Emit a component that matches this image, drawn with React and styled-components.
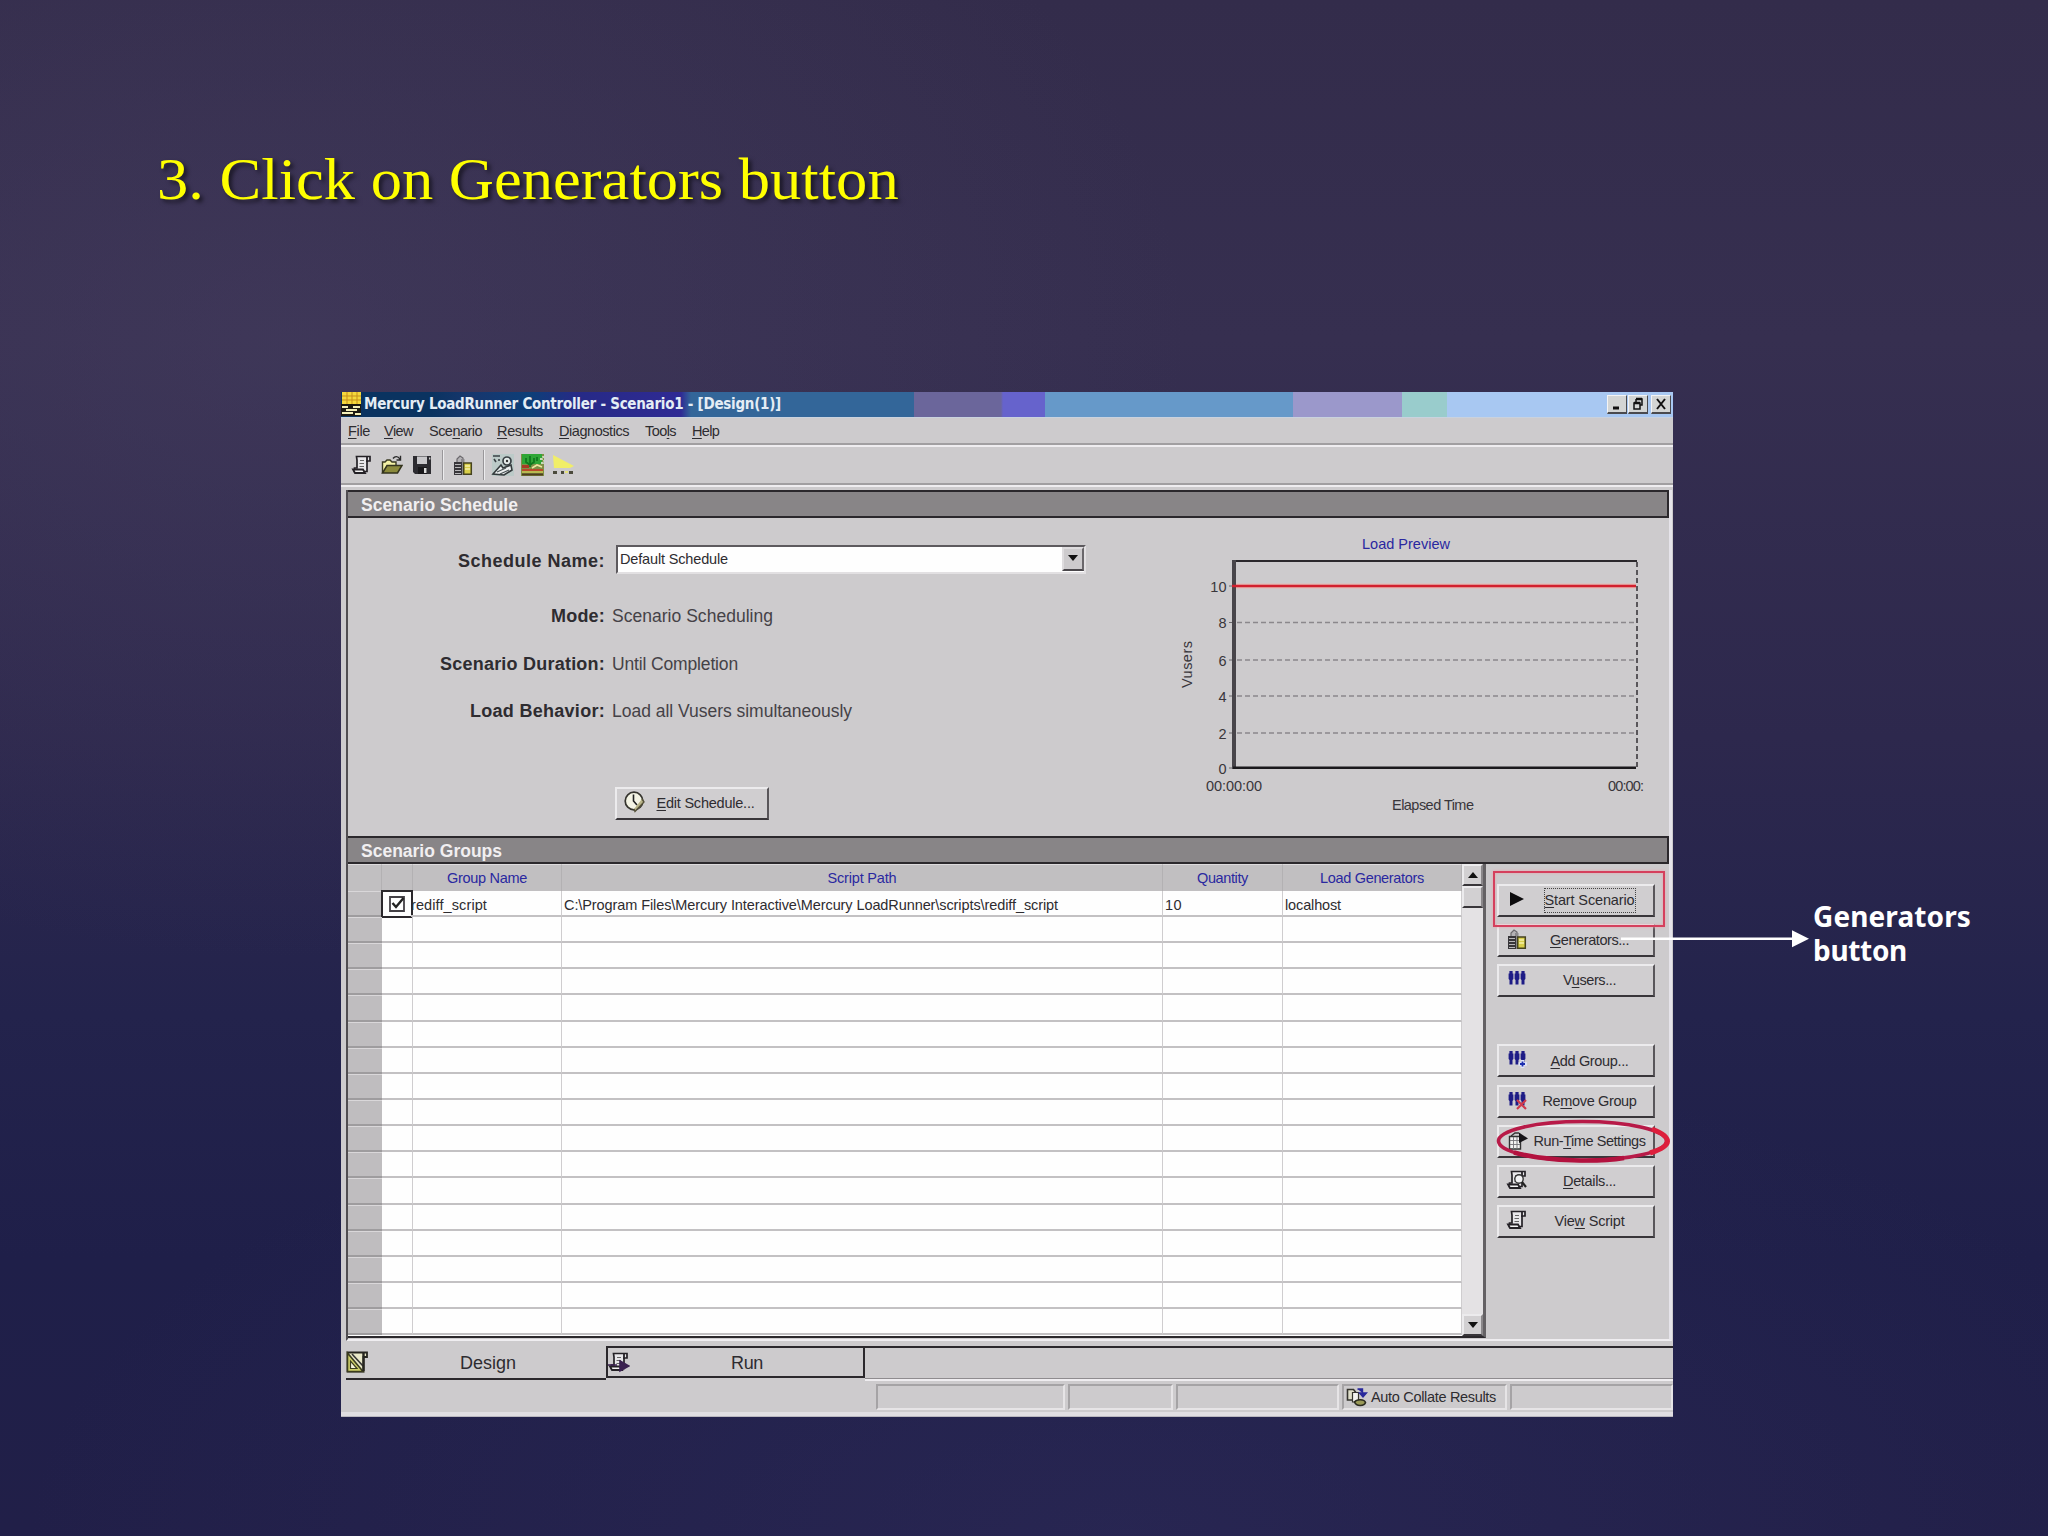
import React from "react";
import styled, { createGlobalStyle } from "styled-components";

const SANS = '"Liberation Sans", Arial, sans-serif';
const TAHOMA = '"DejaVu Sans Condensed", "DejaVu Sans", Tahoma, sans-serif';
const NOTO = '"Noto Sans", Tahoma, sans-serif';
const SERIF = '"Liberation Serif", "Times New Roman", serif';

const C = {
  face: "#cdcbcd",
  head: "#888587",
  dark: "#2b282c",
  gray: "#8f8c8f",
  light: "#efedf0",
  grid: "#c3c1c3",
  blue: "#2a28a0",
  ink: "#2e2c30",
};

const Global = createGlobalStyle`
  body { margin: 0; background: #25244b; }
  * { box-sizing: border-box; }
`;

/* ---------- fitted text ---------- */

const ruler = document.createElement("canvas").getContext("2d");

function spacingFor(text, width, size, weight, family) {
  ruler.font = `${weight} ${size}px ${family}`;
  return (width - ruler.measureText(text).width) / text.length;
}

const Run = styled.span`
  display: inline-block;
  width: ${(p) => p.$w}px;
  flex: none;
  white-space: pre;
  font: ${(p) => p.$weight} ${(p) => p.$size}px/1.15 ${(p) => p.$family};
  letter-spacing: ${(p) => p.$ls}px;
  color: ${(p) => p.$color};
`;

const Key = styled.span`
  text-decoration: underline;
  text-underline-offset: 2px;
  text-decoration-thickness: 1px;
`;

/* An ampersand marks the mnemonic letter, as in a resource file. */
function Text({ children, w, size = 14.5, bold, family = SANS, color = C.ink }) {
  const plain = children.replace("&", "");
  const weight = bold ? 700 : 400;
  const at = children.indexOf("&");
  return (
    <Run
      $w={w}
      $size={size}
      $weight={weight}
      $family={family}
      $color={color}
      $ls={spacingFor(plain, w, size, weight, family)}
    >
      {at < 0 ? plain : (
        <>
          {plain.slice(0, at)}
          <Key>{plain[at]}</Key>
          {plain.slice(at + 1)}
        </>
      )}
    </Run>
  );
}

/* ---------- slide ---------- */

const Slide = styled.main`
  position: relative;
  width: 2048px;
  height: 1536px;
  overflow: hidden;
  padding: 146px 0 0 157px;
  background:
    radial-gradient(ellipse 900px 620px at 14% 22%, rgba(74, 66, 100, 0.42), rgba(74, 66, 100, 0) 100%),
    radial-gradient(ellipse 1100px 500px at 55% 100%, rgba(52, 50, 100, 0.35), rgba(52, 50, 100, 0) 100%),
    linear-gradient(180deg, #332c4b 0%, #362f50 22%, #2d284d 48%, #23234c 66%, #1f1f49 82%, #211f48 100%);
`;

const Heading = styled.h1`
  margin: 0;
  height: 246px;
  font: 400 59px/66px ${SERIF};
  white-space: nowrap;
  color: #ffff00;
  text-shadow: 3px 3px 4px rgba(0, 0, 0, 0.55);
  transform: scaleX(1.06);
  transform-origin: 0 0;
`;

const Callout = styled.div`
  position: absolute;
  left: 1813px;
  top: 900px;
  display: flex;
  flex-direction: column;
  gap: 2px;
`;

const Pointer = styled.svg`
  position: absolute;
  left: 1620px;
  top: 928px;
`;

/* ---------- window ---------- */

const Window = styled.section`
  display: flex;
  flex-direction: column;
  width: 1332px;
  height: 1025px;
  margin-left: 184px;
  background: ${C.face};
`;

const TitleBar = styled.header`
  display: flex;
  align-items: center;
  height: 26px;
  padding: 0 2px 1px 0;
  border-bottom: 1px solid #c9d2de;
  background: linear-gradient(
    90deg,
    #0a3360 0 90px, #17366d 130px, #0d3f78 190px, #262a86 235px, #2f2a94 340px,
    #336699 350px 573px,
    #6b669b 573px 660px,
    #6663cc 662px 704px,
    #6699c9 704px 952px,
    #9b98cb 952px 1061px,
    #99cccc 1061px 1106px,
    #a8c8f2 1106px
  );
`;

const TitleText = styled.div`
  flex: 1;
  padding: 1px 0 0 3px;
`;

const Caption = styled.span`
  display: grid;
  place-items: center;
  width: 20px;
  height: 19px;
  margin-left: ${(p) => p.$gap || 1}px;
  background: #d3d5d4;
  border: 1px solid;
  border-color: #f4f4f4 #4a4a4e #4a4a4e #f4f4f4;
  border-bottom-width: 2px;
`;

const MenuBar = styled.nav`
  display: flex;
  align-items: center;
  height: 29px;
  padding: 0 0 1px 7px;
  border-bottom: 2px solid ${C.light};
  box-shadow: inset 0 -2px 0 #a19fa1;
`;

const MenuItem = styled.span`
  width: ${(p) => p.$slot}px;
`;

const ToolBar = styled.div`
  display: flex;
  align-items: center;
  height: 40px;
  padding: 0 0 2px 10px;
  border-bottom: 2px solid ${C.light};
  box-shadow: inset 0 -2px 0 #a19fa1;
`;

const Tool = styled.span`
  display: grid;
  place-items: center;
  width: ${(p) => p.$slot || 30}px;
`;

const Separator = styled.i`
  width: 2px;
  height: 30px;
  margin: 0 ${(p) => p.$after || 9}px 0 ${(p) => p.$before || 7}px;
  background: linear-gradient(90deg, #99979a 50%, #ececee 50%);
`;

const Body = styled.div`
  display: flex;
  flex-direction: column;
  height: 853px;
  margin: 3px 1px 0 5px;
  border-left: 2px solid #504d51;
  border-right: 3px solid #e6e4ea;
  border-bottom: 2px solid ${C.light};
`;

const SectionBar = styled.h2`
  display: flex;
  align-items: center;
  height: 28px;
  margin: 0;
  padding: 3px 0 0 13px;
  background: ${C.head};
  border: 2px solid ${C.dark};
  border-width: 2px 2px 2px 0;
`;

const Schedule = styled.div`
  display: flex;
  height: 318px;
`;

const Form = styled.div`
  display: flex;
  flex-direction: column;
  width: 802px;
  padding-top: 27px;
`;

const Field = styled.div`
  display: grid;
  grid-template-columns: 257px 1fr;
  column-gap: 7px;
  align-items: center;
  justify-items: start;
  height: ${(p) => p.$h}px;
  margin-bottom: ${(p) => p.$after || 0}px;
`;

const Name = styled.div`
  display: flex;
  justify-self: end;
  padding-top: ${(p) => p.$drop || 0}px;
`;

const Combo = styled.div`
  display: flex;
  align-items: center;
  width: 470px;
  height: 29px;
  margin-left: 4px;
  padding-left: 2px;
  background: #fefefe;
  border: 2px solid;
  border-color: #5d5a5e #e2e0e2 #e2e0e2 #5d5a5e;
`;

const Drop = styled.span`
  display: grid;
  place-items: center;
  width: 22px;
  height: 24px;
  margin-left: auto;
  padding-bottom: 3px;
  background: ${C.face};
  border: 2px solid;
  border-color: #dedcde #6a676b #4a474b #dedcde;
`;

const Push = styled.button`
  display: flex;
  align-items: center;
  width: ${(p) => p.$w || 158}px;
  height: 33px;
  margin: ${(p) => p.$m || "0"};
  padding: 0 9px 0 0;
  background: #d0ced0;
  border: 2px solid;
  border-color: #ecebed #59565a #39363a #ecebed;
  font: inherit;
`;

const Glyph = styled.span`
  display: grid;
  place-items: center;
  flex: none;
  width: 36px;
  height: 28px;
  padding-bottom: 3px;
`;

const Caps = styled.span`
  display: flex;
  flex: 1;
  justify-content: center;
  min-width: 0;
`;

const Focus = styled.span`
  display: flex;
  height: 23px;
  align-items: center;
  outline: 1px dotted #444;
  outline-offset: 0;
`;

/* ---------- groups ---------- */

const Groups = styled.div`
  display: flex;
  flex: 1;
  min-height: 0;
`;

const Table = styled.div`
  width: 1114px;
  height: 474px;
  background: #fefefe;
  border-bottom: 2px solid ${C.dark};
  overflow: hidden;
`;

const Row = styled.div`
  display: grid;
  grid-template-columns: 34px 31px 149px 601px 120px 179px;
  height: ${(p) => (p.$head ? 27 : 26.15)}px;
`;

const HeadCell = styled.div`
  display: flex;
  justify-content: center;
  align-items: center;
  background: #c1bfc1;
  border-right: 1px solid #b3b1b3;
  border-top: 1px solid #dddbdd;
`;

const Cell = styled.div`
  display: flex;
  align-items: center;
  min-width: 0;
  padding: 4px 0 0 2px;
  border-right: 1px solid #cfcdcf;
  border-bottom: 2px solid ${C.grid};
`;

const NameCell = styled(Cell)`
  padding-left: 0;
  margin-left: -2px;
`;

const Stub = styled.div`
  background: #bfbdbf;
  border-bottom: 2px solid #9e9c9e;
  border-top: 1px solid #d9d7d9;
`;

const CheckCell = styled.div`
  display: grid;
  place-items: center;
  margin: -1px 0 -1px -1px;
  border: 2px solid ${C.dark};
`;

const Scroll = styled.div`
  display: flex;
  flex-direction: column;
  width: 24px;
  height: 474px;
  background: #e4e2e4;
  border-right: 3px solid #646164;
  border-bottom: 2px solid ${C.dark};
`;

const ScrollPart = styled.div`
  display: grid;
  place-items: center;
  height: 22px;
  margin-top: ${(p) => (p.$end ? "auto" : 0)};
  background: #d2d0d2;
  border: 2px solid;
  border-color: #ecebed #8a878a #39363a #ecebed;
`;

const Actions = styled.aside`
  position: relative;
  display: flex;
  flex-direction: column;
  gap: 7.15px;
  flex: 1;
  padding: 20px 0 0 11px;
`;

const Highlight = styled.i`
  position: absolute;
  left: 7px;
  top: 7px;
  width: 172px;
  height: 56px;
  border: 2px solid #d5405d;
  box-shadow: 0 0 3px #e9a5ae, inset 0 0 3px #e9a5ae;
`;

const Ring = styled.svg`
  position: absolute;
  left: 8px;
  top: 252px;
`;

const GapRow = styled.i`
  height: 33px;
`;

/* ---------- bottom ---------- */

const TabStrip = styled.div`
  display: flex;
  align-items: flex-start;
  height: 40px;
  padding-top: 5px;
`;

const Tab = styled.div`
  display: flex;
  align-items: center;
  width: ${(p) => (p.$active ? 260 : 259)}px;
  height: ${(p) => (p.$active ? 34 : 32)}px;
  margin-left: ${(p) => (p.$active ? 5 : 0)}px;
  border: 2px solid ${C.dark};
  border-width: ${(p) => (p.$active ? "0 0 2px" : "2px")};
`;

const TabName = styled.span`
  display: flex;
  margin-left: ${(p) => p.$x}px;
  padding-top: 2px;
`;

const TabRest = styled.div`
  flex: 1;
  height: 35px;
  border-top: 2px solid ${C.dark};
  border-bottom: 2px solid ${C.light};
  box-shadow: inset 0 -1px 0 ${C.gray};
`;

const StatusBar = styled.footer`
  display: flex;
  gap: 3px;
  height: 36px;
  padding: 3px 0 0 535px;
  border-bottom: 1px solid #b9b7bf;
  box-shadow: inset 0 -4px 0 #e0dee2;
`;

const StatusCell = styled.div`
  display: flex;
  align-items: center;
  gap: 3px;
  width: ${(p) => p.$w}px;
  height: 26px;
  padding-left: 1px;
  border: 2px solid;
  border-color: #a5a3a5 #e6e4e6 #e6e4e6 #a5a3a5;
`;

/* ---------- icons ---------- */

const Svg = ({ w = 22, h = 22, children, box }) => (
  <svg width={w} height={h} viewBox={box || "0 0 22 22"} fill="none">{children}</svg>
);

const Triangle = ({ up }) => (
  <Svg w={10} h={6} box="0 0 10 6"><path d={up ? "M0 6L5 0L10 6Z" : "M0 0H10L5 6Z"} fill="#111" /></Svg>
);

const AppIcon = () => (
  <Svg w={20} h={24} box="0 0 20 24">
    <path d="M1 0H20V12H1Z" fill="#f4d83c" />
    <path d="M1 4H20M1 8H20M6 0V12M11 0V12M16 0V12" stroke="#c58f1c" />
    <path d="M0 12H20V24H0Z" fill="#1c1a12" />
    <path d="M1 14H7V16H1ZM12 14H19V16H12ZM5 17H16V19H5ZM1 20H12V22H1ZM14 21H20V23H14Z" fill="#f3efb8" />
  </Svg>
);

const ScrollIcon = ({ mark }) => (
  <Svg>
    <path d="M5.5 2.5H19V7H16V17.5H3.5V14H6V6Z" fill="#e8e7ea" stroke="#242126" strokeWidth="1.7" />
    <path d="M16 3V8M2 15.5H12L14 19H4Z" stroke="#242126" strokeWidth="1.8" fill="#f4f4f4" />
    <path d="M9 6.5H13M8.5 9.5H13M8.5 12.5H13" stroke="#666" strokeWidth="1.2" />
    {mark === "lens" && <><circle cx="13" cy="10" r="4.2" fill="#f1f1f3" stroke="#333" strokeWidth="1.4" /><path d="M16 13L20 18" stroke="#222" strokeWidth="2.2" /></>}
    {mark === "run" && <path d="M0 14H9M12 10L21 15L12 20Z" fill="#3b2150" stroke="#3b2150" strokeWidth="1.6" />}
  </Svg>
);

const OpenIcon = () => (
  <Svg>
    <path d="M1.5 19V8H4L6 6H9L11 8H15V11" fill="#f3f1a6" stroke="#3a3a22" strokeWidth="1.4" />
    <path d="M1.5 19L6 11.5H21L16.5 19Z" fill="#8b8a3c" stroke="#33331d" strokeWidth="1.5" />
    <path d="M12 4.5C14 1.8 17 2 18.8 5M19.5 1.8V6H15.5" stroke="#2b2b2b" strokeWidth="1.4" />
  </Svg>
);

const SaveIcon = () => (
  <Svg>
    <path d="M2 2H20V20H4L2 18Z" fill="#2d2c31" />
    <path d="M6 2.5H16V10H6Z" fill="#c9c8cb" />
    <path d="M7 13H16V20H7Z" fill="#19181b" />
    <path d="M13 14H15.5V19H13Z" fill="#dcdcdc" />
    <path d="M18 3.5H19.4V5.5H18Z" fill="#ccc" />
  </Svg>
);

const ServerIcon = () => (
  <Svg>
    <path d="M5 8V5L8 2L11 4V8" fill="#b4b2b5" stroke="#6b696d" strokeWidth="1.2" />
    <path d="M9 5H12.5V21H9Z" fill="#8a888c" />
    <path d="M2 8H10V21H2Z" fill="#38363a" />
    <path d="M3 10.5H9M3 13.5H9M3 16.5H9M3 19.5H9" stroke="#b9b8ba" strokeWidth="1" />
    <path d="M11.7 9H19.3V20.3H11.7Z" fill="#d9cf49" stroke="#45431f" strokeWidth="1.5" />
    <path d="M13 12H18M13 15H18" stroke="#f5f1a8" strokeWidth="1.4" />
  </Svg>
);

const GearsIcon = () => (
  <Svg w={24} h={24} box="0 0 24 24">
    <path d="M1 1H23V23H1Z" fill="#bccac8" />
    <circle cx="16" cy="8" r="4" stroke="#3a4145" strokeWidth="1.7" fill="#e6eceb" />
    <circle cx="16" cy="8" r="1.2" fill="#333" />
    <path d="M2 3H9M3 6L5 9M8 6V8" stroke="#3a4145" strokeWidth="1.6" />
    <path d="M2 21L10 12L12 15L20 12L21 17L13 22Z" fill="#eceff0" stroke="#343a3c" strokeWidth="1.6" />
    <path d="M6 19L15 15M9 21L18 17" stroke="#4c5456" strokeWidth="1.3" />
  </Svg>
);

const ResultsIcon = () => (
  <Svg w={25} h={24} box="0 0 25 24">
    <path d="M1 1H24V23H1Z" fill="#7f8f45" />
    <path d="M2 1H22V11H2Z" fill="#2fa636" />
    <path d="M22 3H24V5H20V7H24V9H21V11H24" fill="#c9d9b8" />
    <path d="M6 5V9L10 12L14 9V5M10 3V14M17 4V8" stroke="#12791f" strokeWidth="1.8" />
    <path d="M2 12H9V15H2Z" fill="#a83a24" />
    <path d="M12 15L17 12L22 14" stroke="#efe7a0" strokeWidth="1.6" />
    <path d="M2 17H23" stroke="#b94a2c" strokeWidth="2" />
    <path d="M2 19H23" stroke="#c9c354" strokeWidth="1.6" />
    <path d="M2 21.5H23" stroke="#513c20" strokeWidth="2" />
  </Svg>
);

const LaunchIcon = () => (
  <Svg w={24} h={24} box="0 0 24 24">
    <path d="M2 2L23 13L19 15H3Z" fill="#f1ee68" />
    <path d="M2 18H6V21H2ZM10 18H13V21H10ZM18 18H22V21H18Z" fill="#4b4a3c" />
    <path d="M14 19H17" stroke="#e6e27a" strokeWidth="2" />
  </Svg>
);

const ClockIcon = () => (
  <Svg w={24} h={24} box="0 0 24 24">
    <circle cx="11" cy="11" r="8.8" fill="#f4f4e4" stroke="#35342e" strokeWidth="1.7" />
    <path d="M10.5 4.5V11L14 15" stroke="#222" strokeWidth="1.6" />
    <path d="M19 9L21 12L12 21.5L11 19" stroke="#55513a" strokeWidth="1.4" fill="#b9b58a" />
  </Svg>
);

const UsersIcon = ({ mark }) => (
  <Svg>
    {[5, 11, 17].map((x) => (
      <g key={x} fill="#1e1c86">
        <path d={`M${x - 1.6} 3H${x + 1.6}V6H${x - 1.6}Z`} />
        <path d={`M${x - 2.4} 5.4H${x + 2.4}V11L${x + 1.5} 12V16.5H${x - 1.5}V12L${x - 2.4} 11Z`} />
      </g>
    ))}
    {mark === "remove" && <path d="M11 11L20 20M20 11L11 20" stroke="#cf3a4c" strokeWidth="2.2" />}
    {mark === "add" && <path d="M12.5 16H21M16.5 12V20" stroke="#dfe3f8" strokeWidth="3.6" />}
    {mark === "add" && <path d="M14 16H19M16.5 13.5V18.5" stroke="#1c2fae" strokeWidth="1.8" />}
  </Svg>
);

const PlayIcon = () => (
  <Svg w={16} h={16} box="0 0 16 16"><path d="M1 1L15 8L1 15Z" fill="#0c0b0d" /></Svg>
);

const RunTimeIcon = () => (
  <Svg>
    <path d="M3.5 7.5H14.5V20H3.5Z" fill="#f3f2f3" stroke="#333" strokeWidth="1.4" />
    <path d="M4 11.5H14M4 15.5H14M7.5 8V20M11 8V20" stroke="#77757a" strokeWidth="0.9" />
    <path d="M5 7L9 4H13" stroke="#333" strokeWidth="1.4" />
    <path d="M13 3.5L22 9.5L13 14Z" fill="#161418" />
  </Svg>
);

const DesignIcon = () => (
  <Svg>
    <path d="M1.5 1.5H21V6H17.5V20.5H1.5Z" fill="#e9e8c8" stroke="#26251f" strokeWidth="1.8" />
    <path d="M1.5 2V20.5H17Z" fill="#cfd06a" stroke="#3c3d1f" strokeWidth="1.6" />
    <path d="M4.5 10V17.5H11Z" fill="#f4f3da" stroke="#3c3d1f" strokeWidth="1.2" />
    <path d="M6 3L17 15" stroke="#333" strokeWidth="1.6" />
    <path d="M17.5 2V20" stroke="#26251f" strokeWidth="2.4" />
  </Svg>
);

const CollateIcon = () => (
  <Svg w={23}>
    <path d="M2 3.5H8L10 6V14H2Z" fill="#dfdec9" stroke="#35342e" strokeWidth="1.6" />
    <path d="M7 6.5H13V16H7Z" fill="#f3f3f0" stroke="#35342e" strokeWidth="1.2" />
    <path d="M12 3H17V7M14 7H21L17.5 11Z" fill="#29299c" stroke="#29299c" strokeWidth="1.4" />
    <path d="M9 16C11 13 19 13 20 16.5C19 20 11 21 9 16Z" fill="#9a9a58" stroke="#2b2b20" strokeWidth="1.6" />
  </Svg>
);

/* ---------- chart ---------- */

const LEVELS = [[10, 586], [8, 622.5], [6, 660], [4, 696], [2, 733], [0, 768]];

function LoadPreview() {
  const t = { fontFamily: SANS, fontSize: 14.5, fill: "#39363b", lengthAdjust: "spacing" };
  return (
    <svg width="519" height="318" viewBox="1151 518 519 318">
      <text {...t} x="1363" y="549" textLength="88" fill={C.blue}>Load Preview</text>
      <path d="M1236 561H1638" stroke="#2b282c" strokeWidth="2" />
      {LEVELS.slice(1, 5).map(([v, y]) => (
        <path key={v} d={`M1238 ${y}H1637`} stroke="#8b888c" strokeWidth="1.6" strokeDasharray="5 3" />
      ))}
      {LEVELS.map(([v, y]) => (
        <g key={v}>
          <text {...t} x="1227.5" y={y + 5.5} textAnchor="end">{v}</text>
          <path d={`M1230 ${y}H1234`} stroke="#6b686c" />
        </g>
      ))}
      <path d="M1638 562V768" stroke="#4d4a4e" strokeWidth="1.8" strokeDasharray="5 3" />
      <path d="M1235 560V769" stroke="#48454a" strokeWidth="4" />
      <path d="M1234 767.7H1637" stroke="#1b191c" strokeWidth="2.6" />
      <path d="M1237 586H1637" stroke="#e6b9b4" strokeWidth="5" />
      <path d="M1233 586H1637" stroke="#d2202e" strokeWidth="2.6" />
      <text {...t} transform="translate(1193 688) rotate(-90)" textLength="47">Vusers</text>
      <text {...t} x="1207" y="791" textLength="56">00:00:00</text>
      <text {...t} x="1609" y="791" textLength="36">00:00:</text>
      <text {...t} x="1393" y="810" textLength="82">Elapsed Time</text>
    </svg>
  );
}

/* ---------- data ---------- */

const MENU = [
  ["&File", 22, 36], ["&View", 29, 45], ["Sce&nario", 53, 68], ["&Results", 46, 62],
  ["&Diagnostics", 70, 86], ["Too&ls", 31, 47], ["&Help", 27, 30],
];

const FIELDS = [
  ["Mode:", 54, "Scenario Scheduling", 161, 48],
  ["Scenario Duration:", 165, "Until Completion", 126, 48],
  ["Load Behavior:", 135, "Load all Vusers simultaneously", 240, 46],
];

const ACTIONS = [
  { text: "&Start Scenario", w: 90, icon: <PlayIcon />, focus: true },
  { text: "&Generators...", w: 79, icon: <ServerIcon /> },
  { text: "V&users...", w: 53, icon: <UsersIcon /> },
  null,
  { text: "&Add Group...", w: 78, icon: <UsersIcon mark="add" /> },
  { text: "Re&move Group", w: 94, icon: <UsersIcon mark="remove" /> },
  { text: "Run-&Time Settings", w: 112, icon: <RunTimeIcon /> },
  { text: "&Details...", w: 53, icon: <ScrollIcon mark="lens" /> },
  { text: "Vie&w Script", w: 70, icon: <ScrollIcon /> },
];

const HEADS = [["Group Name", 80], ["Script Path", 69], ["Quantity", 51], ["Load Generators", 104]];

export default function App() {
  return (
    <>
      <Global />
      <Slide>
        <Heading>3. Click on Generators button</Heading>

        <Window>
          <TitleBar>
            <AppIcon />
            <TitleText>
              <Text w={417} size={15} bold family={TAHOMA} color="#e4edf5">
                {"Mercury LoadRunner Controller - Scenario1 - [Design(1)]"}
              </Text>
            </TitleText>
            <Caption><Svg w={12} h={12} box="0 0 12 12"><path d="M2 10H8" stroke="#111" strokeWidth="3" /></Svg></Caption>
            <Caption>
              <Svg w={14} h={14} box="0 0 14 14">
                <path d="M5 2H11V8H9M5 2V5M3 6H9V12H3Z" stroke="#111" strokeWidth="1.5" />
                <path d="M5 2H11M3 6H9" stroke="#111" strokeWidth="2.6" />
              </Svg>
            </Caption>
            <Caption $gap={3}><Svg w={12} h={12} box="0 0 12 12"><path d="M2 1L10 11M10 1L2 11" stroke="#111" strokeWidth="2" /></Svg></Caption>
          </TitleBar>

          <MenuBar>
            {MENU.map(([label, w, slot]) => (
              <MenuItem key={label} $slot={slot}><Text w={w}>{label}</Text></MenuItem>
            ))}
          </MenuBar>

          <ToolBar>
            <Tool $slot={22}><ScrollIcon /></Tool>
            <Tool $slot={38}><OpenIcon /></Tool>
            <Tool $slot={22}><SaveIcon /></Tool>
            <Separator $before={9} $after={8} />
            <Tool $slot={22}><ServerIcon /></Tool>
            <Separator $before={9} $after={6} />
            <Tool $slot={24}><GearsIcon /></Tool>
            <Tool $slot={35}><ResultsIcon /></Tool>
            <Tool $slot={26}><LaunchIcon /></Tool>
          </ToolBar>

          <Body>
            <SectionBar><Text w={157} size={17.5} bold color="#f1eff1">Scenario Schedule</Text></SectionBar>
            <Schedule>
              <Form>
                <Field $h={29} $after={18}>
                  <Name $drop={3}><Text w={147} size={18} bold>Schedule Name:</Text></Name>
                  <Combo>
                    <Text w={108}>Default Schedule</Text>
                    <Drop><Triangle /></Drop>
                  </Combo>
                </Field>
                {FIELDS.map(([name, nw, value, vw, h]) => (
                  <Field key={name} $h={h}>
                    <Name><Text w={nw} size={18} bold>{name}</Text></Name>
                    <Text w={vw} size={17.5} color="#454247">{value}</Text>
                  </Field>
                ))}
                <Push $w={154} $m="53px 0 0 267px">
                  <Glyph><ClockIcon /></Glyph>
                  <Caps><Text w={98}>&Edit Schedule...</Text></Caps>
                </Push>
              </Form>
              <LoadPreview />
            </Schedule>

            <SectionBar><Text w={141} size={17.5} bold color="#f1eff1">Scenario Groups</Text></SectionBar>
            <Groups>
              <Table>
                <Row $head>
                  <HeadCell />
                  <HeadCell />
                  {HEADS.map(([h, w]) => (
                    <HeadCell key={h}><Text w={w} color={C.blue}>{h}</Text></HeadCell>
                  ))}
                </Row>
                <Row>
                  <Stub />
                  <CheckCell>
                    <Svg w={18} h={18} box="0 0 18 18">
                      <path d="M2 2H16V16H2Z" stroke="#444146" strokeWidth="1.8" />
                      <path d="M4.5 8L8 12L15.5 3" stroke="#222" strokeWidth="2.4" />
                    </Svg>
                  </CheckCell>
                  <NameCell><Text w={76}>rediff_script</Text></NameCell>
                  <Cell><Text w={494}>{"C:\\Program Files\\Mercury Interactive\\Mercury LoadRunner\\scripts\\rediff_script"}</Text></Cell>
                  <Cell><Text w={17}>10</Text></Cell>
                  <Cell><Text w={56}>localhost</Text></Cell>
                </Row>
                {Array.from({ length: 16 }, (_, i) => (
                  <Row key={i}>
                    <Stub /><Cell /><Cell /><Cell /><Cell /><Cell />
                  </Row>
                ))}
              </Table>
              <Scroll>
                <ScrollPart><Triangle up /></ScrollPart>
                <ScrollPart />
                <ScrollPart $end><Triangle /></ScrollPart>
              </Scroll>
              <Actions>
                {ACTIONS.map((a, i) =>
                  a ? (
                    <Push key={i}>
                      <Glyph>{a.icon}</Glyph>
                      <Caps>
                        {a.focus ? <Focus><Text w={a.w}>{a.text}</Text></Focus> : <Text w={a.w}>{a.text}</Text>}
                      </Caps>
                    </Push>
                  ) : <GapRow key={i} />
                )}
                <Highlight />
                <Ring width="178" height="50" viewBox="0 0 178 50" fill="none">
                  <ellipse cx="88.5" cy="25" rx="84" ry="19.5" stroke="#b81a48" strokeWidth="3.6" />
                  <path d="M158 13C179 21 179 30 156 37" stroke="#dd1f3c" strokeWidth="5" />
                  <path d="M20 36.5C55 46 105 46 130 42" stroke="#b3123f" strokeWidth="4.6" />
                </Ring>
              </Actions>
            </Groups>
          </Body>

          <TabStrip>
            <Tab $active>
              <DesignIcon />
              <TabName $x={92}><Text w={56} size={18}>Design</Text></TabName>
            </Tab>
            <Tab>
              <ScrollIcon mark="run" />
              <TabName $x={101}><Text w={32} size={18}>Run</Text></TabName>
            </Tab>
            <TabRest />
          </TabStrip>

          <StatusBar>
            <StatusCell $w={189} />
            <StatusCell $w={105} />
            <StatusCell $w={163} />
            <StatusCell $w={165}>
              <CollateIcon />
              <Text w={125}>Auto Collate Results</Text>
            </StatusCell>
            <StatusCell $w={163} />
          </StatusBar>
        </Window>

        <Pointer width="190" height="22" viewBox="0 0 190 22">
          <path d="M1 10.7H174" stroke="#fff" strokeWidth="2.6" />
          <path d="M172 2.2L189 10.7L172 19.2Z" fill="#fff" />
        </Pointer>
        <Callout>
          <Text w={158} size={28} bold family={NOTO} color="#fff">Generators</Text>
          <Text w={94} size={28} bold family={NOTO} color="#fff">button</Text>
        </Callout>
      </Slide>
    </>
  );
}
